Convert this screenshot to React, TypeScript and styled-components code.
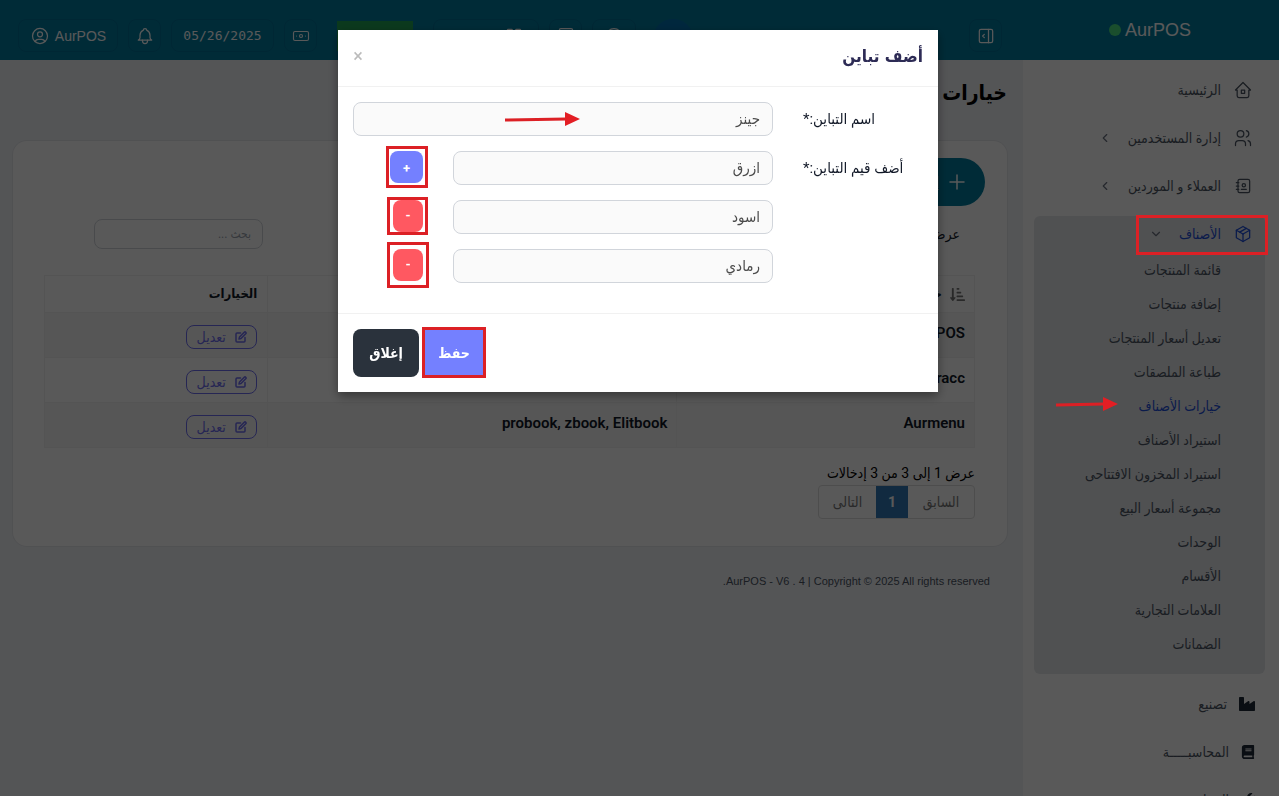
import React from 'react';
import styled, { createGlobalStyle } from 'styled-components';
import { Banknote } from 'lucide-react';
import { FaIndustry, FaBook, FaWrench, FaSortAmountDownAlt } from 'react-icons/fa';
import { FiEdit } from 'react-icons/fi';
import {
  TbUserCircle, TbBell, TbLayoutSidebarRightExpand, TbUsers, TbAddressBook,
  TbPackage, TbChevronLeft, TbChevronDown, TbPlus, TbLayoutGrid, TbCalculator, TbHelpCircle,
} from 'react-icons/tb';

const arabic = '"DejaVu Sans Condensed", "DejaVu Sans", sans-serif';

const Global = createGlobalStyle`
  *, *::before, *::after { box-sizing: border-box; }
  html, body, #root { height: 100%; }
  body { margin: 0; overflow: hidden; background: #f1f3f7; color: #111827; font: 14px/20px Roboto, ${arabic}; }
  button, input { font: inherit; margin: 0; }
  a { color: inherit; text-decoration: none; }
  ul { list-style: none; margin: 0; padding: 0; }
`;

const Page = styled.div`
  display: grid;
  grid-template-columns: 256px minmax(0, 1fr);
  height: 100vh;
  overflow: hidden;
`;

const Sidebar = styled.aside`
  background: #fff;
  height: 100vh;
  overflow: hidden;
`;

const Brand = styled.a`
  display: flex;
  align-items: center;
  justify-content: center;
  height: 60px;
  padding-right: 2px;
  background: #007c9f;
  color: #fff;
  font: 18px/24px "Liberation Sans", sans-serif;
  gap: 4px;
`;

const Dot = styled.span`
  width: 12px;
  height: 12px;
  border-radius: 50%;
  background: #4ade80;
`;

const Nav = styled.nav`
  display: flex;
  flex-direction: column;
  gap: 8px;
  padding: 10px 14px 10px 11px;
`;

const NavGroup = styled.div`
  border-radius: 6px;
  background: #e5e7eb;
  padding-bottom: 13px;
  margin: 2px 0;
  ul { padding-top: 1px; }
`;

const NavItem = styled.a<{ $active?: boolean; $solid?: boolean }>`
  position: relative;
  display: flex;
  align-items: center;
  gap: 12px;
  height: ${p => (p.$active ? 36 : 40)}px;
  padding: 0 ${p => (p.$solid ? 10 : 12)}px;
  color: ${p => (p.$active ? '#1d4ed8' : '#4b5563')};
  > svg { flex: none; color: ${p => (p.$solid ? '#1f2937' : 'inherit')}; }
`;

const Caret = styled.span`
  display: flex;
  margin-inline-start: 4px;
  color: #6b7280;
`;

const SubLink = styled.a<{ $active?: boolean }>`
  position: relative;
  display: block;
  padding: 7px 44px 7px 0;
  color: ${p => (p.$active ? '#1d4ed8' : '#4b5563')};
`;

const Main = styled.div`
  display: flex;
  flex-direction: column;
  min-width: 0;
`;

const TopBar = styled.header`
  display: flex;
  justify-content: space-between;
  height: 60px;
  padding: 19px 21px 8px 18px;
  background: #007c9f;
  color: #fff;
`;

const Tools = styled.div`
  display: flex;
  align-items: center;
  gap: 10px;
`;

const ToolButton = styled.button<{ $w?: number; $mono?: boolean }>`
  display: flex;
  align-items: center;
  justify-content: center;
  gap: 5px;
  width: ${p => p.$w ?? 33}px;
  height: 33px;
  padding: 0;
  border: 1px solid rgba(7, 89, 133, 0.35);
  border-radius: 8px;
  background: transparent;
  color: #fff;
  font: 14px/20px ${p => (p.$mono ? '"DejaVu Sans Mono", monospace' : '"Liberation Sans", ' + arabic)};
  font-size: ${p => (p.$mono ? 13 : 14)}px;
`;

const RepairButton = styled.button`
  display: flex;
  align-items: center;
  justify-content: center;
  gap: 4px;
  width: 76px;
  height: 30px;
  margin: 0 10px;
  padding: 0;
  border: 0;
  background: #22a355;
  color: #fff;
  font-size: 12px;
`;

const RoundButton = styled.button`
  width: 38px;
  height: 34px;
  margin: 0 8px;
  border: 0;
  border-radius: 50%;
  background: #0070b0;
`;

const Content = styled.main`
  padding: 18px 16px 0 13px;
`;

const Title = styled.h1`
  margin: 0 0 33px;
  font: bold 21px/30px ${arabic};
  color: #000;
`;

const Card = styled.section`
  padding: 17px 32px 27px 31px;
  border-radius: 14px;
  background: #fff;
  box-shadow: 0 0 0 1px #e5e7eb;
`;

const AddButton = styled.button`
  display: flex;
  align-items: center;
  gap: 6px;
  width: 110px;
  height: 48px;
  margin-inline-start: -10px;
  padding: 0 16px;
  border: 0;
  border-radius: 24px;
  background: #007c9f;
  color: #fff;
`;

const Filters = styled.div`
  display: flex;
  justify-content: space-between;
  align-items: center;
  margin: 13px 15px 26px 50px;
`;

const Search = styled.input`
  width: 169px;
  height: 30px;
  padding: 0 11px;
  border: 1px solid #d1d5db;
  border-radius: 8px;
  background: transparent;
  font-size: 12px;
  &::placeholder { color: #9ca3af; opacity: 1; }
`;

const Table = styled.table`
  width: 100%;
  table-layout: fixed;
  border-collapse: collapse;
  th, td { border: 1px solid #f1f1f1; text-align: right; }
  th { height: 37px; padding: 0 9px; font: bold 13px/20px ${arabic}; }
  td { height: 45px; padding: 10px 9px 0; font-size: 15px; font-weight: 600; vertical-align: top; }
  tbody tr:nth-child(odd) { background: #f7f7f7; }
  th:last-child, td:last-child { padding-right: 10px; }
`;

const HeadCell = styled.span`
  display: flex;
  align-items: center;
  gap: 8px;
  svg { color: #777; }
`;

const EditButton = styled.button`
  display: flex;
  align-items: center;
  justify-content: center;
  gap: 9px;
  width: 71px;
  height: 24px;
  margin-top: 2px;
  padding: 0;
  border: 1px solid #6e6ef0;
  border-radius: 8px;
  background: transparent;
  color: #6e6ef0;
  font-size: 14px;
  font-weight: 400;
`;

const Summary = styled.p`
  margin: 15px 0 2px;
  color: #000;
`;

const Pager = styled.div`
  display: flex;
  width: 157px;
  border: 1px solid #ddd;
  border-radius: 4px;
`;

const PageButton = styled.button<{ $w: number; $current?: boolean }>`
  flex: 0 0 ${p => p.$w}px;
  height: 32px;
  padding: 0;
  border: 0;
  background: ${p => (p.$current ? '#337ab7' : 'transparent')};
  color: ${p => (p.$current ? '#fff' : '#777')};
  font-weight: ${p => (p.$current ? 700 : 400)};
`;

const Footer = styled.footer`
  padding: 26px 17px;
  color: #4b5563;
  font: 11px/18px "Liberation Sans", sans-serif;
`;

const Backdrop = styled.div`
  position: fixed;
  inset: 0;
  z-index: 10;
  padding: 30px 3px 0 0;
  background: rgba(0, 0, 0, 0.65);
`;

const Dialog = styled.form`
  width: 600px;
  max-width: 100%;
  margin: 0 auto;
  background: #fff;
  box-shadow: 0 4px 10px rgba(0, 0, 0, 0.4);
`;

const DialogHead = styled.header`
  display: flex;
  align-items: center;
  justify-content: space-between;
  height: 57px;
  padding: 0 15px 4px;
  border-bottom: 1px solid #f1f1f1;
  h2 { margin: 0; font: bold 17px/24px ${arabic}; color: #2d2b55; }
`;

const Close = styled.button`
  padding: 0;
  width: 10px;
  border: 0;
  background: none;
  color: #bbb;
  font: 18px/20px Roboto, sans-serif;
`;

const DialogBody = styled.div`
  display: flex;
  flex-direction: column;
  gap: 15px;
  padding: 15px 15px 30px;
`;

const Field = styled.div`
  position: relative;
  display: flex;
  align-items: flex-start;
`;

const FieldLabel = styled.label`
  flex: 0 0 150px;
  padding: 7px 15px 0 30px;
  color: #111827;
  font-size: 15px;
  text-align: left;
  white-space: nowrap;
`;

const Input = styled.input`
  flex: 1;
  min-width: 0;
  height: 34px;
  padding: 0 12px;
  border: 1px solid #d1d5db;
  border-radius: 8px;
  background: #fafafa;
  color: #4b4b4b;
  font-size: 15px;
`;

const Action = styled.div`
  display: flex;
  flex: 0 0 100px;
  padding-right: 30px;
`;

const SmallButton = styled.button<{ $danger?: boolean }>`
  position: relative;
  width: ${p => (p.$danger ? 30 : 33)}px;
  height: 32px;
  padding: ${p => (p.$danger ? 0 : 3)}px 0 0;
  border: 0;
  border-radius: 8px;
  background: ${p => (p.$danger ? '#ff5861' : '#7480ff')};
  color: #fff;
  font: bold 13px/20px Roboto, sans-serif;
`;

const DialogFoot = styled.footer`
  display: flex;
  justify-content: flex-end;
  gap: 5px;
  padding: 15px;
  border-top: 1px solid #f1f1f1;
`;

const FootButton = styled.button<{ $primary?: boolean }>`
  position: relative;
  width: ${p => (p.$primary ? 60 : 66)}px;
  height: 48px;
  padding: 0;
  border: 0;
  border-radius: ${p => (p.$primary ? 0 : 8)}px;
  background: ${p => (p.$primary ? '#7480ff' : '#2a323c')};
  color: #fff;
  font: bold 14px/20px ${arabic};
`;

const Mark = styled.span<{ $box: string }>`
  position: absolute;
  inset: ${p => p.$box};
  z-index: 20;
  border: 3px solid #dc2025;
  pointer-events: none;
`;

const ArrowBox = styled.svg<{ $right: number; $top: number }>`
  position: absolute;
  right: ${p => p.$right}px;
  top: ${p => p.$top}px;
  z-index: 20;
`;

const Arrow = ({ right, top, width }: { right: number; top: number; width: number }) => (
  <ArrowBox $right={right} $top={top} width={width} height="16" aria-hidden="true">
    <path d={`M0 9L${width - 14} 8`} stroke="#dc2025" strokeWidth="3" />
    <path d={`M${width - 15} 1L${width} 8L${width - 15} 15Z`} fill="#e31e24" />
  </ArrowBox>
);

const HomeIcon = () => (
  <svg width="20" height="20" viewBox="0 0 24 24" fill="none" stroke="currentColor" strokeWidth="1.5" strokeLinejoin="round" strokeLinecap="round">
    <path d="M5 12H3L12 3l9 9h-2M5 12v7a2 2 0 0 0 2 2h10a2 2 0 0 0 2-2v-7M10 12h4v4h-4z" />
  </svg>
);

const subLinks = [
  'قائمة المنتجات', 'إضافة منتجات', 'تعديل أسعار المنتجات', 'طباعة الملصقات', 'خيارات الأصناف',
  'استيراد الأصناف', 'استيراد المخزون الافتتاحى', 'مجموعة أسعار البيع', 'الوحدات', 'الأقسام',
  'العلامات التجارية', 'الضمانات',
];

const rows = [
  ['AurPOS', ''],
  ['Auracc', ''],
  ['Aurmenu', 'probook, zbook, Elitbook'],
];

export default function App() {
  return (
    <>
      <Global />
      <Page dir="rtl">
        <Sidebar>
          <Brand href="#">AurPOS <Dot /></Brand>
          <Nav>
            <NavItem href="#"><HomeIcon />الرئيسية</NavItem>
            <NavItem href="#"><TbUsers size={20} strokeWidth={1.5} />إدارة المستخدمين<Caret><TbChevronLeft size={14} /></Caret></NavItem>
            <NavItem href="#"><TbAddressBook size={20} strokeWidth={1.5} />العملاء و الموردين<Caret><TbChevronLeft size={14} /></Caret></NavItem>
            <NavGroup>
              <NavItem href="#" $active>
                <TbPackage size={20} strokeWidth={1.5} />الأصناف<Caret><TbChevronDown size={14} /></Caret>
                <Mark $box="-1px -3px -3px 102px" />
              </NavItem>
              <ul>
                {subLinks.map((label, i) => (
                  <li key={label}>
                    <SubLink href="#" $active={i === 4}>
                      {label}
                      {i === 4 && <Arrow right={147} top={7} width={62} />}
                    </SubLink>
                  </li>
                ))}
              </ul>
            </NavGroup>
            <NavItem href="#" $solid><FaIndustry size={16} />تصنيع</NavItem>
            <NavItem href="#" $solid><FaBook size={14} />المحاسبـــــة</NavItem>
            <NavItem href="#" $solid><FaWrench size={14} />الصيانة</NavItem>
          </Nav>
        </Sidebar>
        <Main>
          <TopBar>
            <ToolButton aria-label="القائمة"><TbLayoutSidebarRightExpand size={20} strokeWidth={1.5} /></ToolButton>
            <Tools>
              <RoundButton aria-label="إضافة" />
              <ToolButton $w={44} aria-label="مساعدة"><TbHelpCircle size={20} strokeWidth={1.5} /></ToolButton>
              <ToolButton aria-label="حاسبة"><TbCalculator size={20} strokeWidth={1.5} /></ToolButton>
              <ToolButton $w={106}><TbLayoutGrid size={20} strokeWidth={1.5} />نقاط البيع</ToolButton>
              <RepairButton><FaWrench size={12} />الصيانة</RepairButton>
              <ToolButton aria-label="النقدية"><Banknote size={18} strokeWidth={1.5} /></ToolButton>
              <ToolButton $w={103} $mono>05/26/2025</ToolButton>
              <ToolButton aria-label="الإشعارات"><TbBell size={20} strokeWidth={1.5} /></ToolButton>
              <ToolButton $w={100} dir="ltr"><TbUserCircle size={20} strokeWidth={1.5} />AurPOS</ToolButton>
            </Tools>
          </TopBar>
          <Content>
            <Title>خيارات الأصناف</Title>
            <Card>
              <AddButton><TbPlus size={24} strokeWidth={1.5} />إضافة</AddButton>
              <Filters>
                <span>عرض 25 إدخالات</span>
                <Search aria-label="بحث" placeholder="بحث ..." />
              </Filters>
              <Table>
                <colgroup><col style={{ width: '32%' }} /><col style={{ width: '44%' }} /><col /></colgroup>
                <thead>
                  <tr><th><HeadCell><FaSortAmountDownAlt size={15} />خيارات</HeadCell></th><th>القيم</th><th>الخيارات</th></tr>
                </thead>
                <tbody>
                  {rows.map(([name, values]) => (
                    <tr key={name}>
                      <td>{name}</td><td>{values}</td>
                      <td><EditButton><FiEdit size={12} strokeWidth={3} />تعديل</EditButton></td>
                    </tr>
                  ))}
                </tbody>
              </Table>
              <Summary>عرض 1 إلى 3 من 3 إدخالات</Summary>
              <Pager>
                <PageButton $w={66}>السابق</PageButton>
                <PageButton $w={32} $current>1</PageButton>
                <PageButton $w={57}>التالى</PageButton>
              </Pager>
            </Card>
            <Footer>AurPOS - V6 . 4 | Copyright © 2025 All rights reserved.</Footer>
          </Content>
        </Main>
        <Backdrop>
          <Dialog role="dialog" aria-label="أضف تباين" onSubmit={e => e.preventDefault()}>
            <DialogHead><h2>أضف تباين</h2><Close type="button" aria-label="إغلاق">×</Close></DialogHead>
            <DialogBody>
              <Field>
                <FieldLabel htmlFor="name">اسم التباين:*</FieldLabel>
                <Input id="name" defaultValue="جينز" />
                <Arrow right={343} top={9} width={75} />
              </Field>
              <Field>
                <FieldLabel htmlFor="value-1">أضف قيم التباين:*</FieldLabel>
                <Input id="value-1" defaultValue="ازرق" />
                <Action><SmallButton type="button">+<Mark $box="-5px -5px -5px -4px" /></SmallButton></Action>
              </Field>
              <Field>
                <FieldLabel htmlFor="value-2" />
                <Input id="value-2" defaultValue="اسود" />
                <Action><SmallButton type="button" $danger>-<Mark $box="-3px -5px -3px -6px" /></SmallButton></Action>
              </Field>
              <Field>
                <FieldLabel htmlFor="value-3" />
                <Input id="value-3" defaultValue="رمادي" />
                <Action><SmallButton type="button" $danger>-<Mark $box="-7px -6px -7px -6px" /></SmallButton></Action>
              </Field>
            </DialogBody>
            <DialogFoot>
              <FootButton $primary>حفظ<Mark $box="-2px -2px -1px -2px" /></FootButton>
              <FootButton type="button">إغلاق</FootButton>
            </DialogFoot>
          </Dialog>
        </Backdrop>
      </Page>
    </>
  );
}
